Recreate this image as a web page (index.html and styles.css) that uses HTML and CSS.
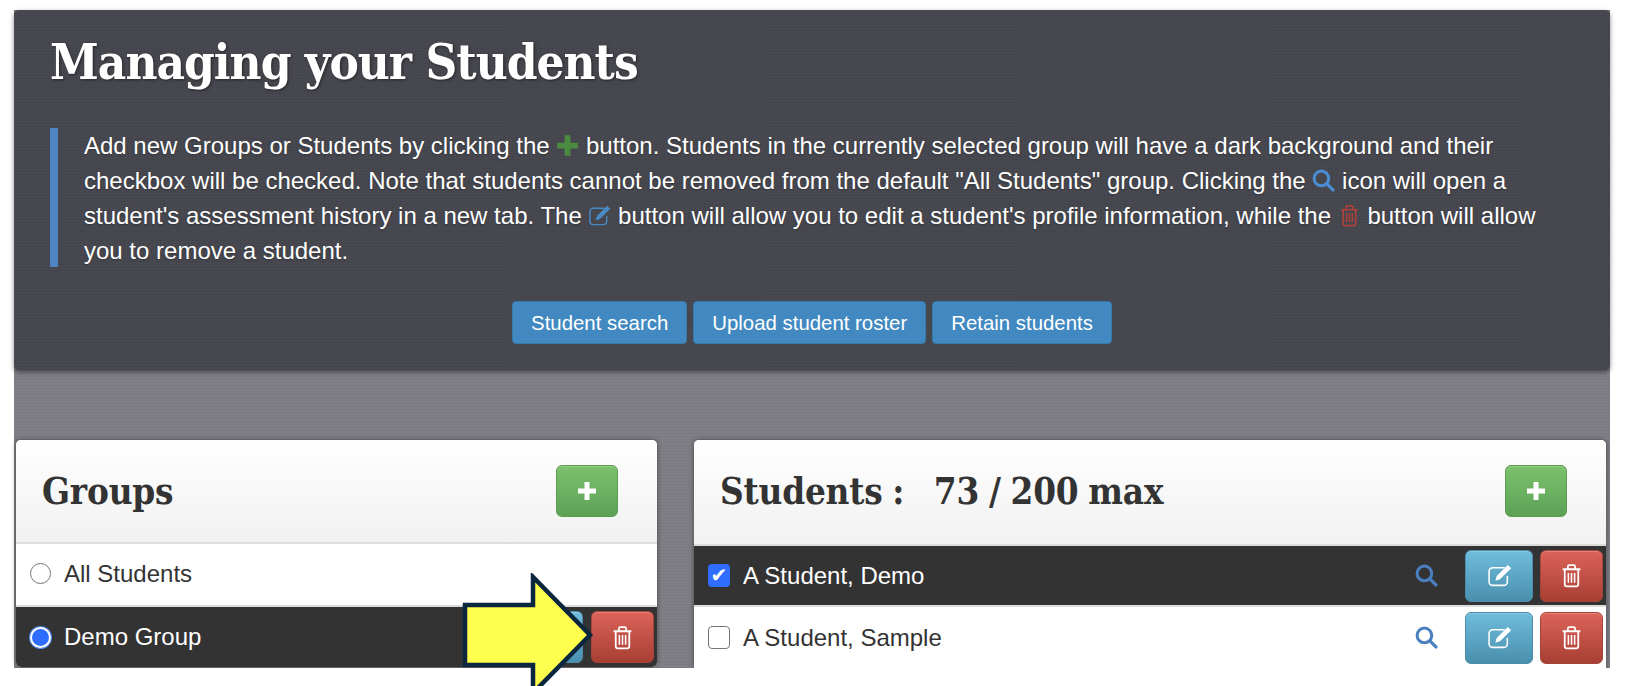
FILE: index.html
```html
<!DOCTYPE html>
<html lang="en">
<head>
    <meta charset="UTF-8">
    <title>Managing your Students</title>
    <link rel="stylesheet" href="styles.css">
</head>
<body>
    <svg class="sprites" width="0" height="0">
        <symbol id="i-plus" viewBox="0 0 20 20">
            <path d="M7.500 1h5v6.500H19v5h-6.500V19h-5v-6.500H1v-5h6.500z" fill="currentColor"/>
        </symbol>
        <symbol id="i-search" viewBox="0 0 22 22">
            <circle cx="9" cy="9" r="7" fill="none" stroke="currentColor" stroke-width="2.900"/>
            <path d="M14.500 14.500L20 20" fill="none" stroke="currentColor" stroke-width="3.200" stroke-linecap="round"/>
        </symbol>
        <symbol id="i-edit" viewBox="0 0 24 22">
            <path d="M16.500 3.500H5.500a3.500 3.500 0 0 0-3.500 3.500V17a3.500 3.500 0 0 0 3.500 3.500H16a3.500 3.500 0 0 0 3.500-3.500v-5" fill="none" stroke="currentColor" stroke-width="1.500" stroke-linecap="round"/>
            <path d="M20 .8l3.200 3.200-10.700 10.700-4.500 1.300 1.300-4.500z" fill="currentColor"/>
        </symbol>
        <symbol id="i-trash" viewBox="0 0 20 24">
            <path d="M1.500 6h17M6.500 6V3.500a1.500 1.500 0 0 1 1.500-1.500h4a1.500 1.500 0 0 1 1.500 1.500V6M3.500 6v14.500a2 2 0 0 0 2 2h9a2 2 0 0 0 2-2V6" fill="none" stroke="currentColor" stroke-width="1.700"/>
            <path d="M7 9.500v9.500M10 9.500v9.500M13 9.500v9.500" fill="none" stroke="currentColor" stroke-width="1.500"/>
        </symbol>
    </svg>

    <div class="page">
        <div class="intro">
            <h1>Managing your Students</h1>
            <blockquote>
                Add new Groups or Students by clicking the
                <svg class="inline-icon plus"><use href="#i-plus"/></svg>
                button. Students in the currently selected group will have a dark background and their
                checkbox will be checked. Note that students cannot be removed from the default "All Students" group. Clicking the
                <svg class="inline-icon search"><use href="#i-search"/></svg>
                icon will open a student's assessment history in a new tab. The
                <svg class="inline-icon edit"><use href="#i-edit"/></svg>
                button will allow you to edit a student's profile information, while the
                <svg class="inline-icon trash"><use href="#i-trash"/></svg>
                button will allow you to remove a student.
            </blockquote>
            <div class="intro-btns">
                <a class="btn-primary">Student search</a>
                <a class="btn-primary">Upload student roster</a>
                <a class="btn-primary">Retain students</a>
            </div>
        </div>

        <div class="columns">
            <section class="panel groups">
                <header class="panel-head">
                    <h2>Groups</h2>
                    <button class="btn btn-add"><svg><use href="#i-plus"/></svg></button>
                </header>
                <div class="row row-first">
                    <input type="radio" name="group">
                    <span class="name">All Students</span>
                </div>
                <div class="row active">
                    <input type="radio" name="group" checked>
                    <span class="name">Demo Group</span>
                    <button class="btn btn-edit"><svg><use href="#i-edit"/></svg></button>
                    <button class="btn btn-del"><svg><use href="#i-trash"/></svg></button>
                </div>
            </section>

            <section class="panel students">
                <header class="panel-head">
                    <h2>Students :&nbsp;&nbsp; 73 / 200 max</h2>
                    <button class="btn btn-add"><svg><use href="#i-plus"/></svg></button>
                </header>
                <div class="row active">
                    <input type="checkbox" checked>
                    <span class="name">A Student, Demo</span>
                    <svg class="row-search"><use href="#i-search"/></svg>
                    <button class="btn btn-edit"><svg><use href="#i-edit"/></svg></button>
                    <button class="btn btn-del"><svg><use href="#i-trash"/></svg></button>
                </div>
                <div class="row">
                    <input type="checkbox">
                    <span class="name">A Student, Sample</span>
                    <svg class="row-search"><use href="#i-search"/></svg>
                    <button class="btn btn-edit"><svg><use href="#i-edit"/></svg></button>
                    <button class="btn btn-del"><svg><use href="#i-trash"/></svg></button>
                </div>
            </section>
        </div>

        <svg class="arrow" width="140" height="130" viewBox="0 0 140 130">
            <path d="M4 32H72V4L129 62 72 120V92H4z" fill="#ffff4d" stroke="#0b2740" stroke-width="4.500"/>
        </svg>
    </div>
</body>
</html>
```

FILE: styles.css
```css
*{
    padding: 0;
    margin: 0;
    box-sizing: border-box;
}
html,body{
    height: 686px;
    overflow: hidden;
    background: #fff;
}
body{
    font-family: "Liberation Sans", Arial, sans-serif;
    color: #333;
    padding: 10px 16px 0 14px;
}
.sprites{
    position: absolute;
}
.page{
    position: relative;
    height: 658px;
    background-color: #7f7e85;
    background-image:
        repeating-linear-gradient(0deg, rgba(0,0,0,.03) 0 1px, transparent 1px 3px),
        repeating-linear-gradient(90deg, rgba(255,255,255,.025) 0 1px, transparent 1px 4px);
}
.intro{
    height: 360px;
    padding: 22px 36px 0;
    border-radius: 5px;
    color: #fff;
    background-color: #47484f;
    background-image:
        repeating-linear-gradient(0deg, rgba(0,0,0,.045) 0 1px, transparent 1px 3px),
        repeating-linear-gradient(90deg, rgba(255,255,255,.015) 0 1px, transparent 1px 4px);
    box-shadow: 0 2px 5px rgba(0,0,0,.45);
}
.intro h1{
    font-family: "DejaVu Serif Condensed", "DejaVu Serif", serif;
    font-stretch: condensed;
    font-weight: 700;
    font-size: 49px;
    letter-spacing: -1px;
    line-height: 60px;
    text-shadow: 1px 1px 3px rgba(0,0,0,.5);
}
.intro blockquote{
    margin-top: 36px;
    height: 139px;
    padding: 0 14px 0 26px;
    border-left: 8px solid #4c84c4;
    font-size: 24px;
    line-height: 35px;
    text-shadow: 0 1px 2px rgba(0,0,0,.3);
}
.inline-icon{
    display: inline-block;
    width: 23px;
    height: 23px;
    vertical-align: -3px;
}
.inline-icon.plus{
    color: #4b8b3f;
}
.inline-icon.search{
    color: #4b8dd2;
}
.inline-icon.edit{
    color: #4a8ac4;
}
.inline-icon.trash{
    color: #b0413a;
}
.intro-btns{
    display: flex;
    justify-content: center;
    gap: 6px;
    margin-top: 34px;
}
.btn-primary{
    display: block;
    height: 43px;
    padding: 0 18px;
    border: 1px solid #357ca8;
    border-radius: 4px;
    background: #4189c0;
    font-size: 20.400px;
    line-height: 42px;
    color: #fff;
}

.columns{
    display: flex;
    gap: 37px;
    margin: 70px 4px 0 2px;
    clip-path: inset(-10px -10px 0 -10px);
}
.panel{
    height: 228px;
    background: #fff;
    border-radius: 5px 5px 0 0;
    box-shadow: 0 0 5px rgba(0,0,0,.45);
}
.groups{
    width: 641px;
    height: 227px;
    border-radius: 5px;
}
.students{
    width: 912px;
}
.panel-head{
    display: flex;
    align-items: center;
    justify-content: space-between;
    height: 104px;
    padding: 0 39px 0 26px;
    border-bottom: 2px solid #ddd;
    border-radius: 5px 5px 0 0;
    background: linear-gradient(#fff, #f1f1f1);
}
.panel-head h2{
    font-family: "DejaVu Serif Condensed", "DejaVu Serif", serif;
    font-stretch: condensed;
    font-weight: 700;
    font-size: 36.500px;
    letter-spacing: -.2px;
    word-spacing: -1.400px;
    color: #333;
    white-space: pre;
}
.students .panel-head{
    height: 106px;
    padding-bottom: 2px;
}
.row{
    display: flex;
    align-items: center;
    height: 61px;
    padding: 0 3px 0 14px;
    border-bottom: 2px solid #ddd;
    gap: 8px;
}
.groups .row-first{
    height: 63px;
    padding-bottom: 2px;
}
.groups .row.active{
    height: 60px;
    border-radius: 0 0 5px 5px;
}
.row:last-child{
    border-bottom: 0;
}
.row.active{
    background: #333;
    color: #fff;
}
.students .row{
    padding-right: 3px;
    gap: 7px;
}
.row .name{
    flex: 1;
    font-size: 24px;
    margin-left: 5px;
}
.students .name{
    margin-left: 6px;
}
.row input{
    appearance: none;
    flex: none;
    width: 21px;
    height: 21px;
    background: #fff;
    border: 1.500px solid #767676;
    border-radius: 50%;
}
.row input:checked{
    background: #2f6dff;
    border: 2.500px solid #fff;
    box-shadow: 0 0 0 1px #4f86e8;
}
.row input[type=checkbox]{
    position: relative;
    width: 22px;
    height: 23px;
    border-radius: 4px;
}
.row input[type=checkbox]:checked{
    border: 0;
    box-shadow: none;
}
.row input[type=checkbox]:checked::before{
    content: "\2714";
    position: absolute;
    inset: 0;
    font: 700 20px/23px "DejaVu Sans", sans-serif;
    color: #fff;
    text-align: center;
}
.row-search{
    flex: none;
    width: 23px;
    height: 23px;
    margin-right: 20px;
    color: #4a80c0;
}
.btn{
    flex: none;
    display: flex;
    align-items: center;
    justify-content: center;
    border-radius: 6px;
    color: #fff;
    cursor: pointer;
    box-shadow: inset 0 1px 0 rgba(255,255,255,.2);
}
.btn svg{
    width: 25px;
    height: 25px;
}
.btn-add{
    width: 62px;
    height: 52px;
    border: 1px solid #5d9a52;
    background: linear-gradient(#7cc16c, #5da157);
}
.btn-add svg{
    width: 20px;
    height: 20px;
}
.btn-edit{
    width: 68px;
    height: 52px;
    border: 1px solid #4b8eab;
    background: linear-gradient(#6fbcdc, #4a90ae);
}
.btn-del{
    width: 63px;
    height: 52px;
    border: 1px solid #a5443a;
    background: linear-gradient(#dc635a, #a83f33);
}
.arrow{
    position: absolute;
    left: 447px;
    top: 563px;
}
```
